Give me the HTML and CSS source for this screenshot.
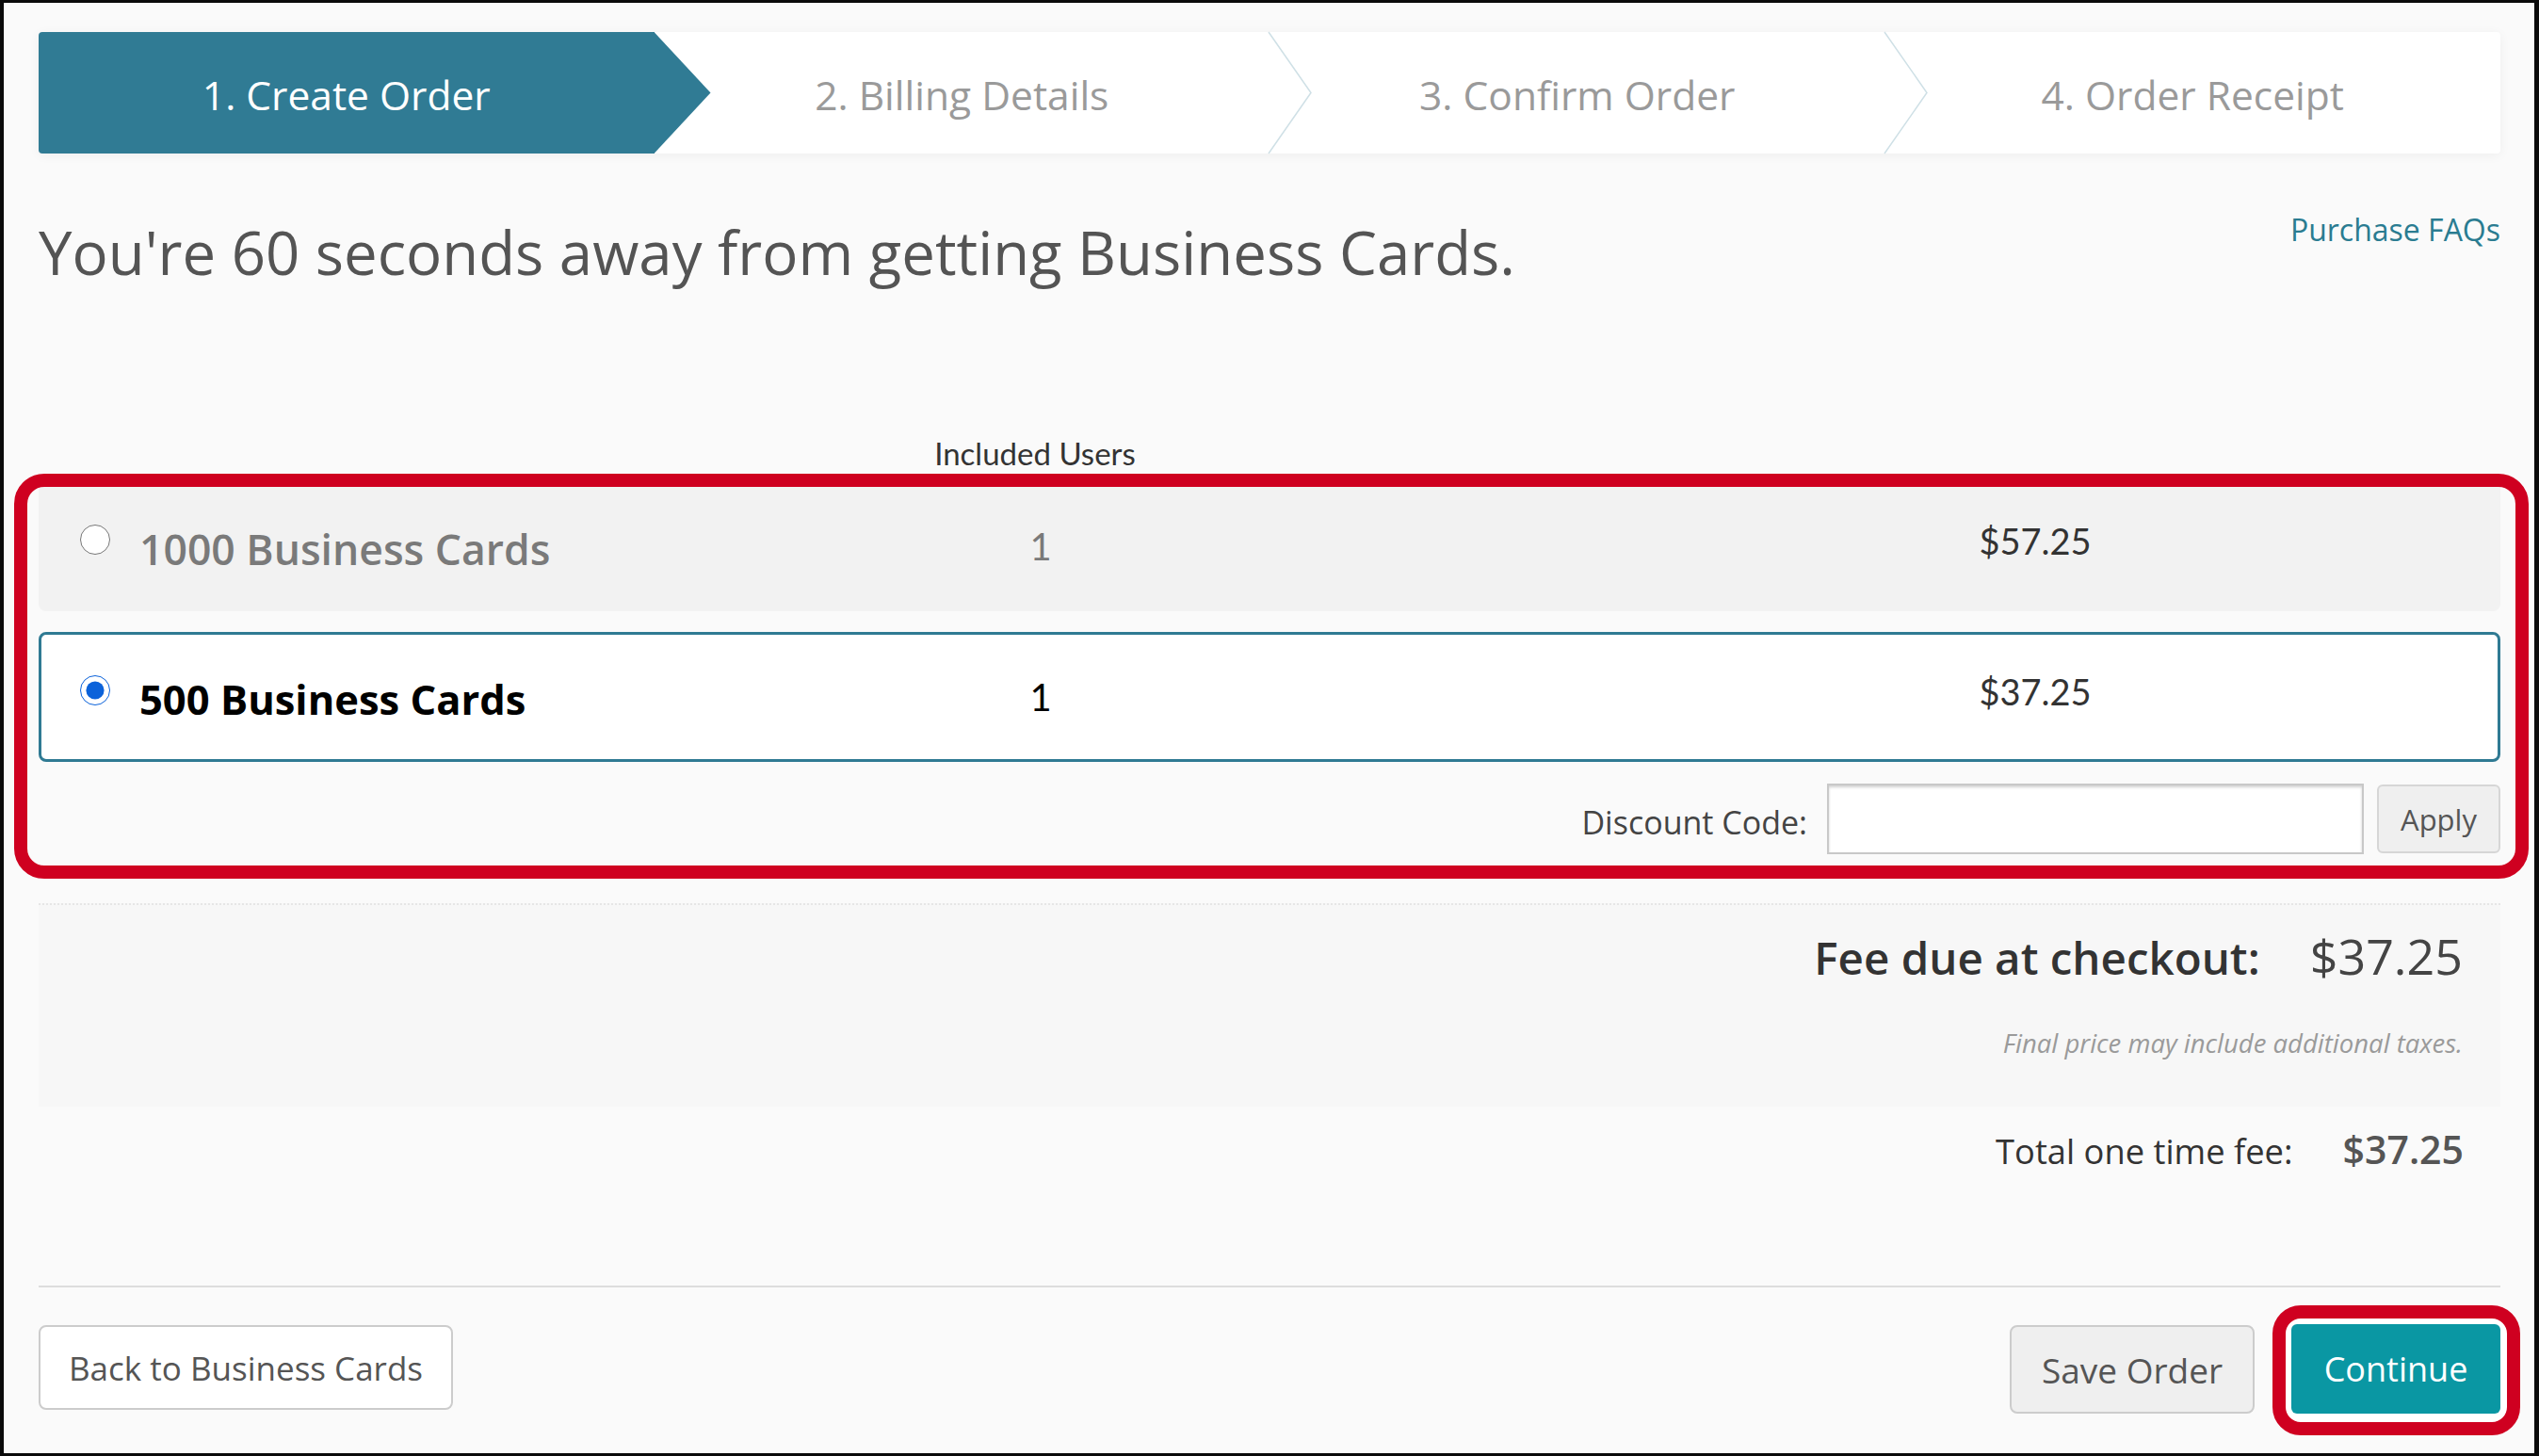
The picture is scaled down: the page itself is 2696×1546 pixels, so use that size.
FILE: index.html
```html
<!DOCTYPE html>
<html lang="en">
<head>
<meta charset="utf-8">
<title>Create Order</title>
<link rel="stylesheet" href="styles.css">
</head>
<body>
<div class="frame">
  <nav class="steps">
    <div class="step active"><span>1. Create Order</span></div>
    <div class="step sep"><span>2. Billing Details</span><svg class="chev" viewBox="0 0 46 129" preserveAspectRatio="none"><polyline points="0,0 45,64.5 0,129"/></svg></div>
    <div class="step sep"><span>3. Confirm Order</span><svg class="chev" viewBox="0 0 46 129" preserveAspectRatio="none"><polyline points="0,0 45,64.5 0,129"/></svg></div>
    <div class="step"><span>4. Order Receipt</span></div>
  </nav>

  <div class="head">
    <h1 class="title">You're 60 seconds away from getting Business Cards.</h1>
    <a class="faq">Purchase FAQs</a>
  </div>

  <div class="grid colhead"><span></span><span class="users-h">Included Users</span></div>

  <label class="grid opt">
    <span class="name"><input type="radio" name="pkg" class="radio"><span class="name-t">1000 Business Cards</span></span>
    <span class="users">1</span>
    <span></span>
    <span class="price">$57.25</span>
  </label>

  <label class="grid opt selected">
    <span class="name"><input type="radio" name="pkg" class="radio" checked><span class="name-t">500 Business Cards</span></span>
    <span class="users">1</span>
    <span></span>
    <span class="price">$37.25</span>
  </label>

  <div class="discount">
    <span class="disc-l">Discount Code:</span>
    <input class="disc-in" type="text">
    <button class="apply" type="button">Apply</button>
  </div>

  <div class="fee-box">
    <div class="fee-line"><span class="fee-l">Fee due at checkout:</span><span class="fee-v">$37.25</span></div>
    <div class="taxes">Final price may include additional taxes.</div>
  </div>

  <div class="total"><span class="total-l">Total one time fee:</span><span class="total-v">$37.25</span></div>

  <div class="footer">
    <button class="btn back" type="button">Back to Business Cards</button>
    <button class="btn save" type="button">Save Order</button>
    <span class="ring"><button class="btn cont" type="button">Continue</button></span>
  </div>

  <div class="hl-box"></div>
</div>
</body>
</html>
```

FILE: styles.css
```css
* { box-sizing: border-box; }
html, body { margin: 0; padding: 0; }
body {
  width: 2696px;
  height: 1546px;
  font-family: "Open Sans", "Noto Sans", sans-serif;
  background: #fafafa;
  overflow: hidden;
}
.frame {
  position: relative;
  width: 2696px;
  height: 1546px;
  border-style: solid;
  border-color: #0a0a0a;
  border-width: 3px 5px 3px 4px;
  padding: 31px 36px 0 37px;
  background: #fafafa;
}

/* steps */
.steps {
  display: grid;
  grid-template-columns: repeat(4, 1fr);
  height: 129px;
  background: #fff;
  border-radius: 4px;
  box-shadow: 0 2px 12px rgba(0,0,0,0.05);
}
.step {
  position: relative;
  display: flex;
  align-items: center;
  justify-content: center;
  font-size: 42.5px;
  line-height: 42px;
  color: #9a9a9a;
  padding-top: 4px;
}
.step.active {
  background: #307b94;
  color: #fff;
  border-radius: 4px 0 0 4px;
}
.step.active::after {
  content: "";
  position: absolute;
  top: 0;
  left: 100%;
  width: 60px;
  height: 100%;
  background: #307b94;
  clip-path: polygon(0 0, 100% 50%, 0 100%);
}
.step span { position: relative; z-index: 1; }
.chev {
  position: absolute;
  top: 0;
  right: -45px;
  width: 46px;
  height: 129px;
  overflow: visible;
  z-index: 2;
}
.chev polyline {
  fill: none;
  stroke: #cfe0e6;
  stroke-width: 1.5;
}

/* heading */
.head {
  display: flex;
  justify-content: space-between;
  align-items: flex-start;
  margin-top: 65px;
}
.title {
  margin: 10px 0 0 0;
  font-size: 63.5px;
  line-height: 60px;
  font-weight: 400;
  color: #545454;
}
.faq {
  font-size: 32px;
  line-height: 31px;
  color: #2a7c91;
  text-decoration: none;
}

/* option grid */
.grid {
  display: grid;
  grid-template-columns: 820px 400px 1fr 400px 291px;
  align-items: center;
}
.colhead {
  margin-top: 167px;
  padding-left: 38px;
}
.users-h {
  font-family: Lato, "Open Sans", sans-serif;
  font-size: 33px;
  line-height: 33px;
  color: #333;
  text-align: center;
}
.opt {
  height: 138px;
  padding-left: 41px;
  border: 3px solid transparent;
  border-radius: 8px;
  background: #f2f2f2;
  margin-top: 13px;
}
.opt.selected {
  margin-top: 22px;
  background: #fff;
  border-color: #2f7a93;
}
.name {
  display: flex;
  align-items: center;
  gap: 31px;
}
.radio {
  width: 32px;
  height: 32px;
  margin: -14px 0 0 0;
  accent-color: #0b62da;
}
.name-t {
  font-size: 44.5px;
  line-height: 42px;
  font-weight: 600;
  color: #7a7a7a;
  padding-top: 6px;
}
.selected .name-t {
  font-size: 43.5px;
  font-weight: 700;
  color: #000;
}
.users {
  font-family: Lato, "Open Sans", sans-serif;
  font-size: 40px;
  line-height: 40px;
  color: #7a7a7a;
  text-align: center;
}
.selected .users { color: #000; }
.price {
  font-family: Lato, "Open Sans", sans-serif;
  font-size: 38px;
  line-height: 38px;
  color: #333;
  text-align: center;
  margin-top: -12px;
}

/* discount */
.discount {
  display: flex;
  justify-content: flex-end;
  align-items: center;
  margin-top: 23px;
  height: 75px;
}
.disc-l {
  font-size: 34px;
  line-height: 33px;
  color: #444;
  margin-top: 8px;
  margin-right: 21px;
}
.disc-in {
  width: 570px;
  height: 75px;
  border: 2px solid #c8c8c8;
  box-shadow: inset 0 2px 3px rgba(0,0,0,0.18);
  background: #fff;
  margin: 0 14px 0 0;
}
.apply {
  width: 131px;
  height: 73px;
  border: 2px solid #d6d6d6;
  border-radius: 6px;
  background: #efefef;
  font-family: "Open Sans", sans-serif;
  font-size: 31px;
  color: #555;
  padding: 0;
}

/* fee */
.fee-box {
  margin-top: 52px;
  border-top: 2px dotted #e6e6e6;
  background: #f7f7f7;
  padding: 30px 40px 54px 0;
}
.fee-line {
  display: flex;
  justify-content: flex-end;
  align-items: baseline;
  gap: 53px;
  line-height: 47px;
}
.fee-l { font-size: 47.5px; font-weight: 600; color: #333; }
.fee-v { font-size: 52px; font-weight: 500; color: #444; }
.taxes {
  margin-top: 55px;
  text-align: right;
  font-size: 27.5px;
  line-height: 26px;
  font-style: italic;
  color: #9a9a9a;
}
.total {
  display: flex;
  justify-content: flex-end;
  align-items: baseline;
  gap: 53px;
  margin-top: 27px;
  padding-right: 39px;
  line-height: 37px;
}
.total-l { font-size: 36.3px; color: #333; }
.total-v { font-size: 41px; font-weight: 600; color: #555; }

/* footer */
.footer {
  display: flex;
  align-items: flex-start;
  margin-top: 124px;
  border-top: 2px solid #dddddd;
  padding-top: 40px;
}
.btn {
  font-family: "Open Sans", sans-serif;
  padding: 0;
  cursor: pointer;
}
.back {
  width: 440px;
  height: 90px;
  border: 2px solid #cccccc;
  border-radius: 8px;
  background: #fff;
  font-size: 35px;
  color: #555;
}
.save {
  margin-left: auto;
  width: 260px;
  height: 94px;
  border: 2px solid #cccccc;
  border-radius: 8px;
  background: #efefef;
  font-size: 37px;
  color: #555;
}
.ring {
  position: relative;
  display: block;
  margin-left: 39px;
  margin-top: -1px;
}
.ring::before {
  content: "";
  position: absolute;
  top: -20px;
  left: -20px;
  right: -21px;
  bottom: -23px;
  border: 14px solid #cf0020;
  border-radius: 30px;
  background: #fff;
}
.cont {
  position: relative;
  z-index: 1;
  display: block;
  width: 222px;
  height: 95px;
  border: none;
  border-radius: 6px;
  background: #0a97a3;
  color: #fff;
  font-size: 36px;
}

/* annotation */
.hl-box {
  position: absolute;
  left: 11px;
  top: 500px;
  width: 2670px;
  height: 430px;
  border: 14px solid #cf0020;
  border-radius: 32px;
  pointer-events: none;
}
```
